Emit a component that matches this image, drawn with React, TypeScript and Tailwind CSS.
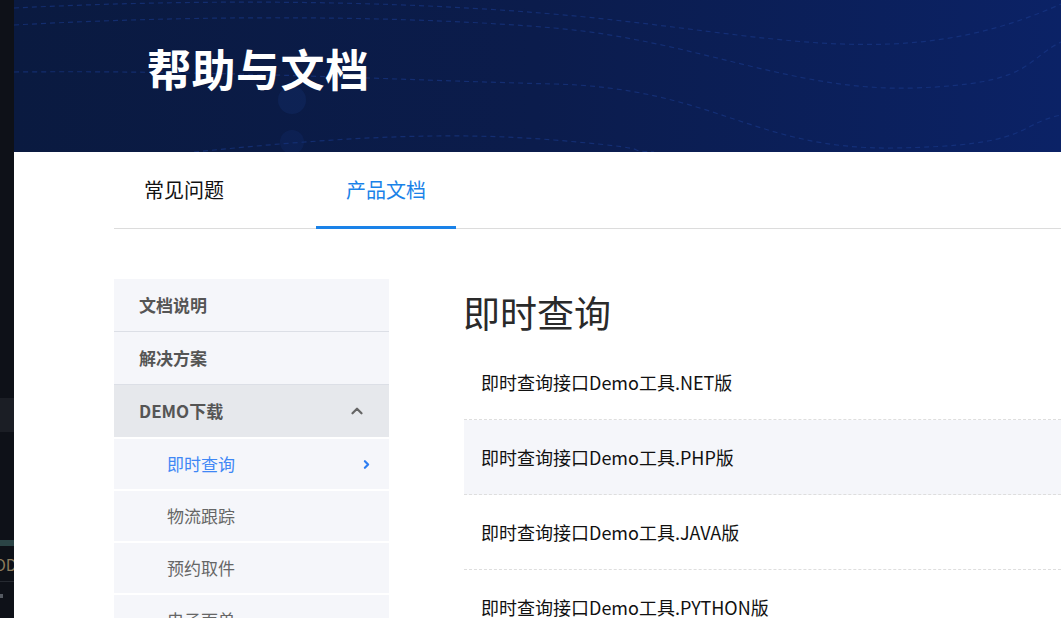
import { ChevronUp, ChevronRight } from 'lucide-react'

const FONT = "font-['Microsoft_YaHei','Noto_Sans_CJK_SC',sans-serif]"

const MENU = ['文档说明', '解决方案']
const SUB = ['即时查询', '物流跟踪', '预约取件', '电子面单']
const DOCS = [
  '即时查询接口Demo工具.NET版',
  '即时查询接口Demo工具.PHP版',
  '即时查询接口Demo工具.JAVA版',
  '即时查询接口Demo工具.PYTHON版',
]

function HeaderWaves() {
  return (
    <svg className="absolute inset-0 h-full w-full" viewBox="0 0 1047 152" preserveAspectRatio="none" fill="none">
      <g stroke="#1a3a8c" strokeWidth="1.2" strokeDasharray="5 4" opacity="0.6">
        <path d="M0 8 C 200 -2, 420 0, 600 20 S 900 70, 1047 4" />
        <path d="M0 25 C 200 14, 400 16, 540 28 S 780 92, 900 88 S 1010 60, 1047 42" />
        <path d="M0 72 C 200 70, 380 80, 540 84 S 740 150, 880 148 S 1000 125, 1047 115" />
        <path d="M180 152 C 300 140, 420 130, 540 140 S 600 150, 640 152" />
      </g>
      <circle cx="278" cy="100" r="14" fill="#13306f" opacity="0.35" />
      <circle cx="278" cy="142" r="12" fill="#13306f" opacity="0.3" />
    </svg>
  )
}

export default function App() {
  return (
    <div className={`flex h-[618px] w-[1061px] overflow-hidden bg-white ${FONT}`}>
      {/* neighbouring window strip */}
      <div className="flex w-[14px] shrink-0 flex-col bg-[#0e1118]">
        <div className="h-[398px]" />
        <div className="h-[34px] bg-[#1b1e25]" />
        <div className="h-[108px]" />
        <div className="h-[6px] bg-[#2b4446]" />
        <div className="h-[6px]" />
        <div className="-ml-[6px] h-[24px] overflow-hidden whitespace-nowrap text-[16px] leading-[24px] text-[#8c7c5c]">OD</div>
        <div className="h-[6px] border-b border-[#262a31]" />
        <div className="h-[12px]" />
        <div className="h-[4px] w-[3px] bg-[#555a62]" />
      </div>

      <div className="flex min-w-0 flex-1 flex-col">
        {/* banner */}
        <div className="relative h-[152px] shrink-0 overflow-hidden bg-gradient-to-r from-[#0a1a40] via-[#0b1c4c] to-[#0b2266]">
          <HeaderWaves />
          <h1 className="relative pl-[133px] pt-[40px] text-[44px] font-bold leading-[56px] tracking-[0.5px] text-white">
            帮助与文档
          </h1>
        </div>

        {/* tabs */}
        <div className="ml-[100px] flex h-[77px] shrink-0 border-b border-[#dcdcdc]">
          <div className="flex w-[202px] items-center pl-[30px] text-[20px] text-[#111]">常见问题</div>
          <div className="relative flex w-[140px] items-center justify-center text-[20px] text-[#1a82e8]">
            产品文档
            <span className="absolute -bottom-px left-0 right-0 h-[3px] bg-[#1a82e8]" />
          </div>
        </div>

        {/* body */}
        <div className="ml-[100px] mt-[50px] flex gap-[75px]">
          <div className="w-[275px] shrink-0 bg-[#f5f6fa]">
            {MENU.map((m) => (
              <div key={m} className="flex h-[53px] items-center border-b border-[#dcdfe6] pl-[25px] text-[17px] font-bold text-[#555]">
                {m}
              </div>
            ))}
            <div className="flex h-[52px] items-center justify-between bg-[#e6e8ec] pl-[25px] pr-[23px] text-[17px] font-bold text-[#555]">
              DEMO下载
              <ChevronUp className="h-[18px] w-[18px] text-[#666]" strokeWidth={3} />
            </div>
            {SUB.map((s, i) => (
              <div
                key={s}
                className={`flex h-[52px] items-center justify-between border-t-2 border-white pl-[53px] pr-[16px] text-[17px] ${i === 0 ? 'text-[#3f87f5]' : 'text-[#666]'}`}
              >
                {s}
                {i === 0 && <ChevronRight className="h-[13px] w-[13px] text-[#2d7ef2]" strokeWidth={4} />}
              </div>
            ))}
          </div>

          <div className="min-w-0 flex-1">
            <h2 className="-ml-[1px] flex h-[66px] items-center text-[37px] leading-none text-[#2a2a2a]">即时查询</h2>
            {DOCS.map((d, i) => (
              <div
                key={d}
                className={`flex h-[75px] items-center border-b border-dashed border-[#dedede] pl-[17px] text-[18px] text-[#111] ${i === 1 ? 'bg-[#f5f6fa]' : ''}`}
              >
                {d}
              </div>
            ))}
          </div>
        </div>
      </div>
    </div>
  )
}
